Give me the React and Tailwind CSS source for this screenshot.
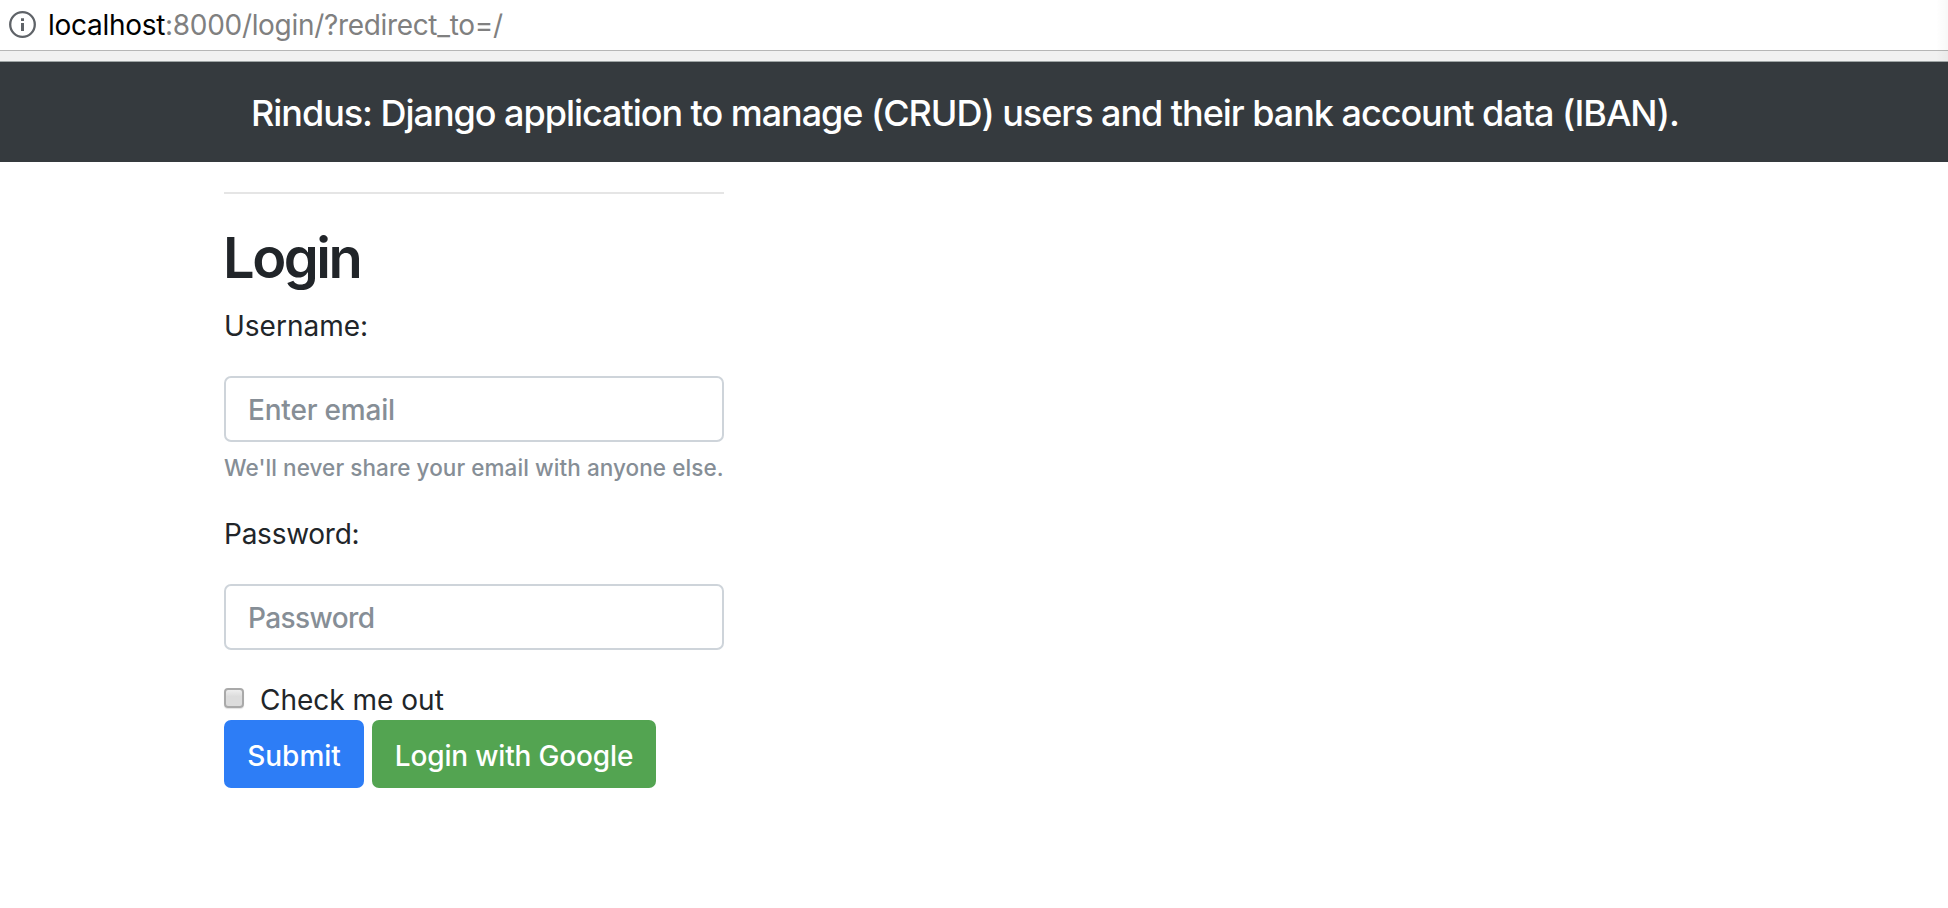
function InfoIcon() {
  return (
    <svg className="ml-[9px] size-[27px] shrink-0" viewBox="0 0 27 27" fill="none">
      <circle cx="13.5" cy="13.5" r="12.3" stroke="#5f6368" strokeWidth="2.3" />
      <path d="M12 7.3h3v2.8h-3zM12 12h3v8h-3z" fill="#5f6368" />
    </svg>
  );
}

function AddressBar() {
  return (
    <div className="relative flex h-[61px] flex-col bg-[#f1f1f1]">
      <div className="flex h-[50px] items-center bg-white pb-px text-[28px] leading-[47px] whitespace-pre">
        <InfoIcon />
        <span className="mt-[2px] ml-[12px] tracking-[-0.28px] text-black">localhost</span>
        <span className="mt-[2px] tracking-[-0.32px] text-[#808080]">:8000/login/?redirect_to=/</span>
      </div>
      <div className="h-px bg-[#b6b6b6]" />
      <div className="absolute top-0 right-0 h-[61px] w-3 bg-linear-to-r from-black/0 to-black/3" />
    </div>
  );
}

const inputClass =
  "block h-[66px] w-full rounded-[7px] border-2 border-[#ced4da] bg-white pl-[22px] pr-[20px] pt-[2px] text-[28px] font-medium text-[#495057] outline-none placeholder:text-[#868e96] placeholder:opacity-100";

export default function App() {
  return (
    <div className="h-[908px] overflow-hidden bg-white font-['Inter','Liberation_Sans',sans-serif] text-[#212529]">
      <AddressBar />
      <header className="flex h-[101px] items-center border-t border-[#9fa5a5] bg-[#353a3e] pt-[2px] pl-[251px]">
        <h1 className="text-[36px] leading-[54px] font-medium tracking-[-1.04px] whitespace-nowrap text-white">
          Rindus: Django application to manage (CRUD) users and their bank account data (IBAN).
        </h1>
      </header>
      <main className="ml-[224px] w-[500px] pt-[30px]">
        <hr className="h-[2px] border-0 bg-[#e5e5e5]" />
        <h2 className="mt-[33px] -ml-px text-[56px] leading-[62px] font-semibold tracking-[-2.5px]">Login</h2>
        <form>
          <label className="mt-4 block text-[28px] leading-[42px]">Username:</label>
          <div className="mt-[29px]">
            <input type="text" placeholder="Enter email" className={`${inputClass} tracking-[-0.2px]`} />
          </div>
          <small className="mt-[9px] block text-[22.5px] leading-[34px] font-medium tracking-[0.07px] whitespace-nowrap text-[#868e96]">
            We'll never share your email with anyone else.
          </small>
          <label className="mt-[28px] block text-[28px] leading-[42px] tracking-[-0.25px]">Password:</label>
          <div className="mt-[29px]">
            <input type="password" placeholder="Password" className={`${inputClass} tracking-[-0.6px]`} />
          </div>
          <label className="mt-[30px] flex h-[40px] items-center text-[28px] leading-[40px]">
            <input
              type="checkbox"
              className="-mt-[4px] mr-[16px] size-[20px] appearance-none rounded-[4px] border-[2px] border-[#a9a9a9] bg-linear-to-b from-[#eeeeee] to-[#dcdcdc] to-40% shadow-[0_1px_1px_rgba(0,0,0,0.12)]"
            />
            Check me out
          </label>
          <div className="flex gap-[8px] text-[28px] font-medium text-white">
            <button type="button" className="h-[68px] w-[140px] rounded-[7px] bg-[#2d7df6] pt-[3px]">
              Submit
            </button>
            <button type="button" className="h-[68px] w-[284px] rounded-[7px] bg-[#53a451] pt-[3px] tracking-[-0.17px] whitespace-nowrap">
              Login with Google
            </button>
          </div>
        </form>
      </main>
    </div>
  );
}
